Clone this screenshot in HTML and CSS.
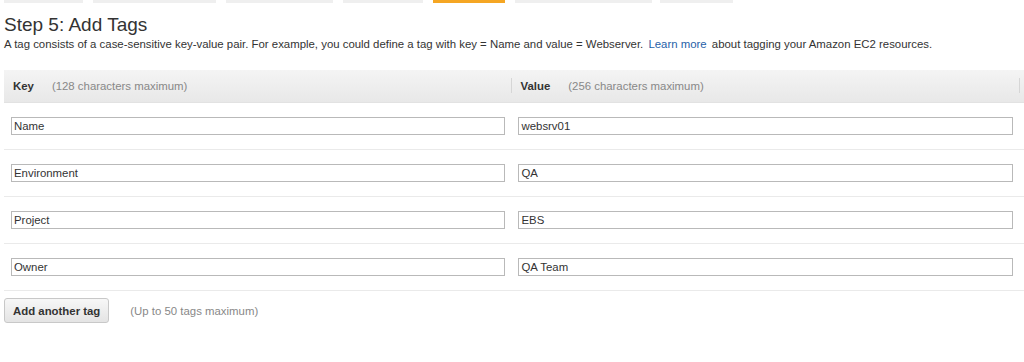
FILE: index.html
```html
<!DOCTYPE html>
<html lang="en">
<head>
  <meta charset="UTF-8" />
  <title>Step 5: Add Tags</title>
  <link rel="stylesheet" href="styles.css">
</head>
<body>
  <!-- wizard step indicator -->
  <div class="steps">
    <span class="step s1"></span>
    <span class="step s2"></span>
    <span class="step s3"></span>
    <span class="step s4"></span>
    <span class="step s5 active"></span>
    <span class="step s6"></span>
    <span class="step s7"></span>
  </div>

  <div class="content">
    <h1>Step 5: Add Tags</h1>
    <p class="intro">A tag consists of a case-sensitive key-value pair. For example, you could define a tag with key = Name and value = Webserver. <a href="#">Learn more</a> about tagging your Amazon EC2 resources.</p>

    <table class="tags">
      <thead>
        <tr>
          <th class="col-key"><b>Key</b><span class="hint">(128 characters maximum)</span></th>
          <th class="col-value"><b>Value</b><span class="hint">(256 characters maximum)</span></th>
          <th class="col-del"></th>
        </tr>
      </thead>
      <tbody>
        <tr>
          <td><input type="text" value="Name"></td>
          <td><input type="text" value="websrv01"></td>
          <td></td>
        </tr>
        <tr>
          <td><input type="text" value="Environment"></td>
          <td><input type="text" value="QA"></td>
          <td></td>
        </tr>
        <tr>
          <td><input type="text" value="Project"></td>
          <td><input type="text" value="EBS"></td>
          <td></td>
        </tr>
        <tr>
          <td><input type="text" value="Owner"></td>
          <td><input type="text" value="QA Team"></td>
          <td></td>
        </tr>
      </tbody>
    </table>

    <div class="actions">
      <button class="btn">Add another tag</button>
      <span class="hint">(Up to 50 tags maximum)</span>
    </div>
  </div>
</body>
</html>
```

FILE: styles.css
```css
body {
  margin: 0;
  font-family: 'Liberation Sans', Arial, sans-serif;
  font-size: 11.4px;
  color: #333;
  background: #fff;
}
.steps {
  display: flex;
  height: 3px;
  padding-left: 4px;
}
.step {
  display: block;
  height: 3px;
  background: #efefef;
  margin-right: 10px;
}
.step.active {
  background: #f5a623;
}
.s1 { width: 79px; }
.s2 { width: 123px; }
.s3 { width: 107px; }
.s4 { width: 80px; }
.s5 { width: 72px; }
.s6 { width: 137px; margin-right: 8px; }
.s7 { width: 73px; }
.content {
  padding: 0 0 0 4px;
}
h1 {
  margin: 10px 0 0 0;
  font-size: 19px;
  font-weight: normal;
  line-height: 24px;
  color: #333;
}
.intro {
  margin: 0;
  line-height: 15px;
  color: #333;
}
.intro a {
  color: #1f5fa8;
  text-decoration: none;
  margin: 0 2px;
}
.tags {
  margin-top: 18px;
  width: 1020px;
  border-collapse: collapse;
}
.tags th {
  height: 32px;
  padding: 0 0 0 9px;
  text-align: left;
  font-weight: normal;
  background: linear-gradient(#f4f4f4, #e8e8e8);
  border-bottom: 1px solid #e2e2e2;
  position: relative;
}
.tags th b {
  color: #333;
  font-weight: bold;
}
.tags th .hint {
  margin-left: 18px;
}
/* short column dividers in the header */
.tags th.col-value::before,
.tags th.col-del::before {
  content: "";
  position: absolute;
  left: 0;
  top: 8px;
  bottom: 9px;
  border-left: 1px solid #d6d6d6;
}
.col-key { width: 498px; }
.col-value { width: 498px; }
.col-del { width: 5px; padding: 0 !important; }
.hint {
  color: #888;
}
.tags td {
  padding: 14px 6px 14px 7px;
  border-bottom: 1px solid #eaeaea;
  height: 18px;
}
.tags td:last-child {
  padding: 0;
}
.tags input {
  display: block;
  box-sizing: border-box;
  width: 100%;
  height: 18px;
  margin: 0;
  padding: 0 2px;
  border: 1px solid #b9b9b9;
  font-family: 'Liberation Sans', Arial, sans-serif;
  font-size: 11.4px;
  color: #333;
  background: #fff;
}
.actions {
  display: flex;
  align-items: center;
  margin-top: 7px;
}
.btn {
  height: 25px;
  padding: 0 8px;
  border: 1px solid #c8c8c8;
  border-radius: 3px;
  background: linear-gradient(#f7f7f7, #e4e4e4);
  font-family: 'Liberation Sans', Arial, sans-serif;
  font-size: 11.4px;
  font-weight: bold;
  color: #333;
  cursor: pointer;
}
.actions .hint {
  margin-left: 21px;
}
```
